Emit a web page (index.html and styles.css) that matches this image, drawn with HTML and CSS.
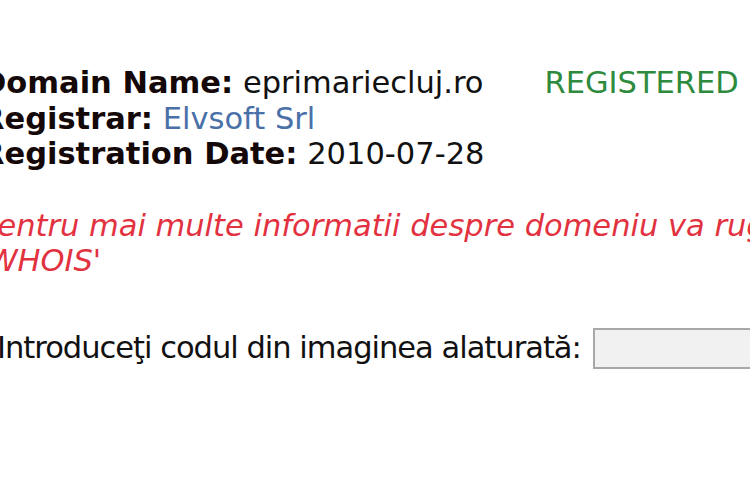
FILE: index.html
```html
<!DOCTYPE html>
<html>
<head>
<meta charset="utf-8">
<link rel="stylesheet" href="styles.css">
</head>
<body>
<div class="page">
  <div class="info">
    <div class="row">
      <span class="field"><b>Domain Name:</b> eprimariecluj.ro</span>
      <span class="status">REGISTERED</span>
    </div>
    <div class="row"><span class="field"><b>Registrar:</b> <span class="link">Elvsoft Srl</span></span></div>
    <div class="row"><span class="field"><b>Registration Date:</b> 2010-07-28</span></div>
  </div>
  <p class="note">Pentru mai multe informatii despre domeniu va rugam accesati<br>'WHOIS'</p>
  <div class="captcha">
    <label class="label">Introduceţi codul din imaginea alaturată:</label>
    <input class="code" type="text">
  </div>
</div>
</body>
</html>
```
FILE: styles.css
```css
html, body {
  margin: 0;
  padding: 0;
  background: #ffffff;
  overflow: hidden;
}
.page {
  width: 1200px;
  margin-left: -19px;
  padding-top: 65px;
  font-family: "DejaVu Sans", Verdana, sans-serif;
  font-size: 30.5px;
  line-height: 35.5px;
  color: #111111;
}
.row {
  display: flex;
  white-space: nowrap;
}
.field b {
  font-weight: bold;
  color: #140808;
}
.status {
  margin-left: 61px;
  color: #2e8b3e;
}
.link {
  color: #4a70a8;
}
.note {
  margin: 36px 0 0 -2px;
  font-style: italic;
  color: #e2323f;
  white-space: nowrap;
}
.captcha {
  margin-top: 49px;
  display: flex;
  align-items: center;
  white-space: nowrap;
}
.label {
  margin-left: 16px;
  letter-spacing: -1px;
}
.code {
  margin-left: 12px;
  width: 300px;
  height: 41px;
  box-sizing: border-box;
  border: 2px solid #a8a8a8;
  background: #f1f1f1;
  padding: 0;
  font-size: 26px;
}
```
